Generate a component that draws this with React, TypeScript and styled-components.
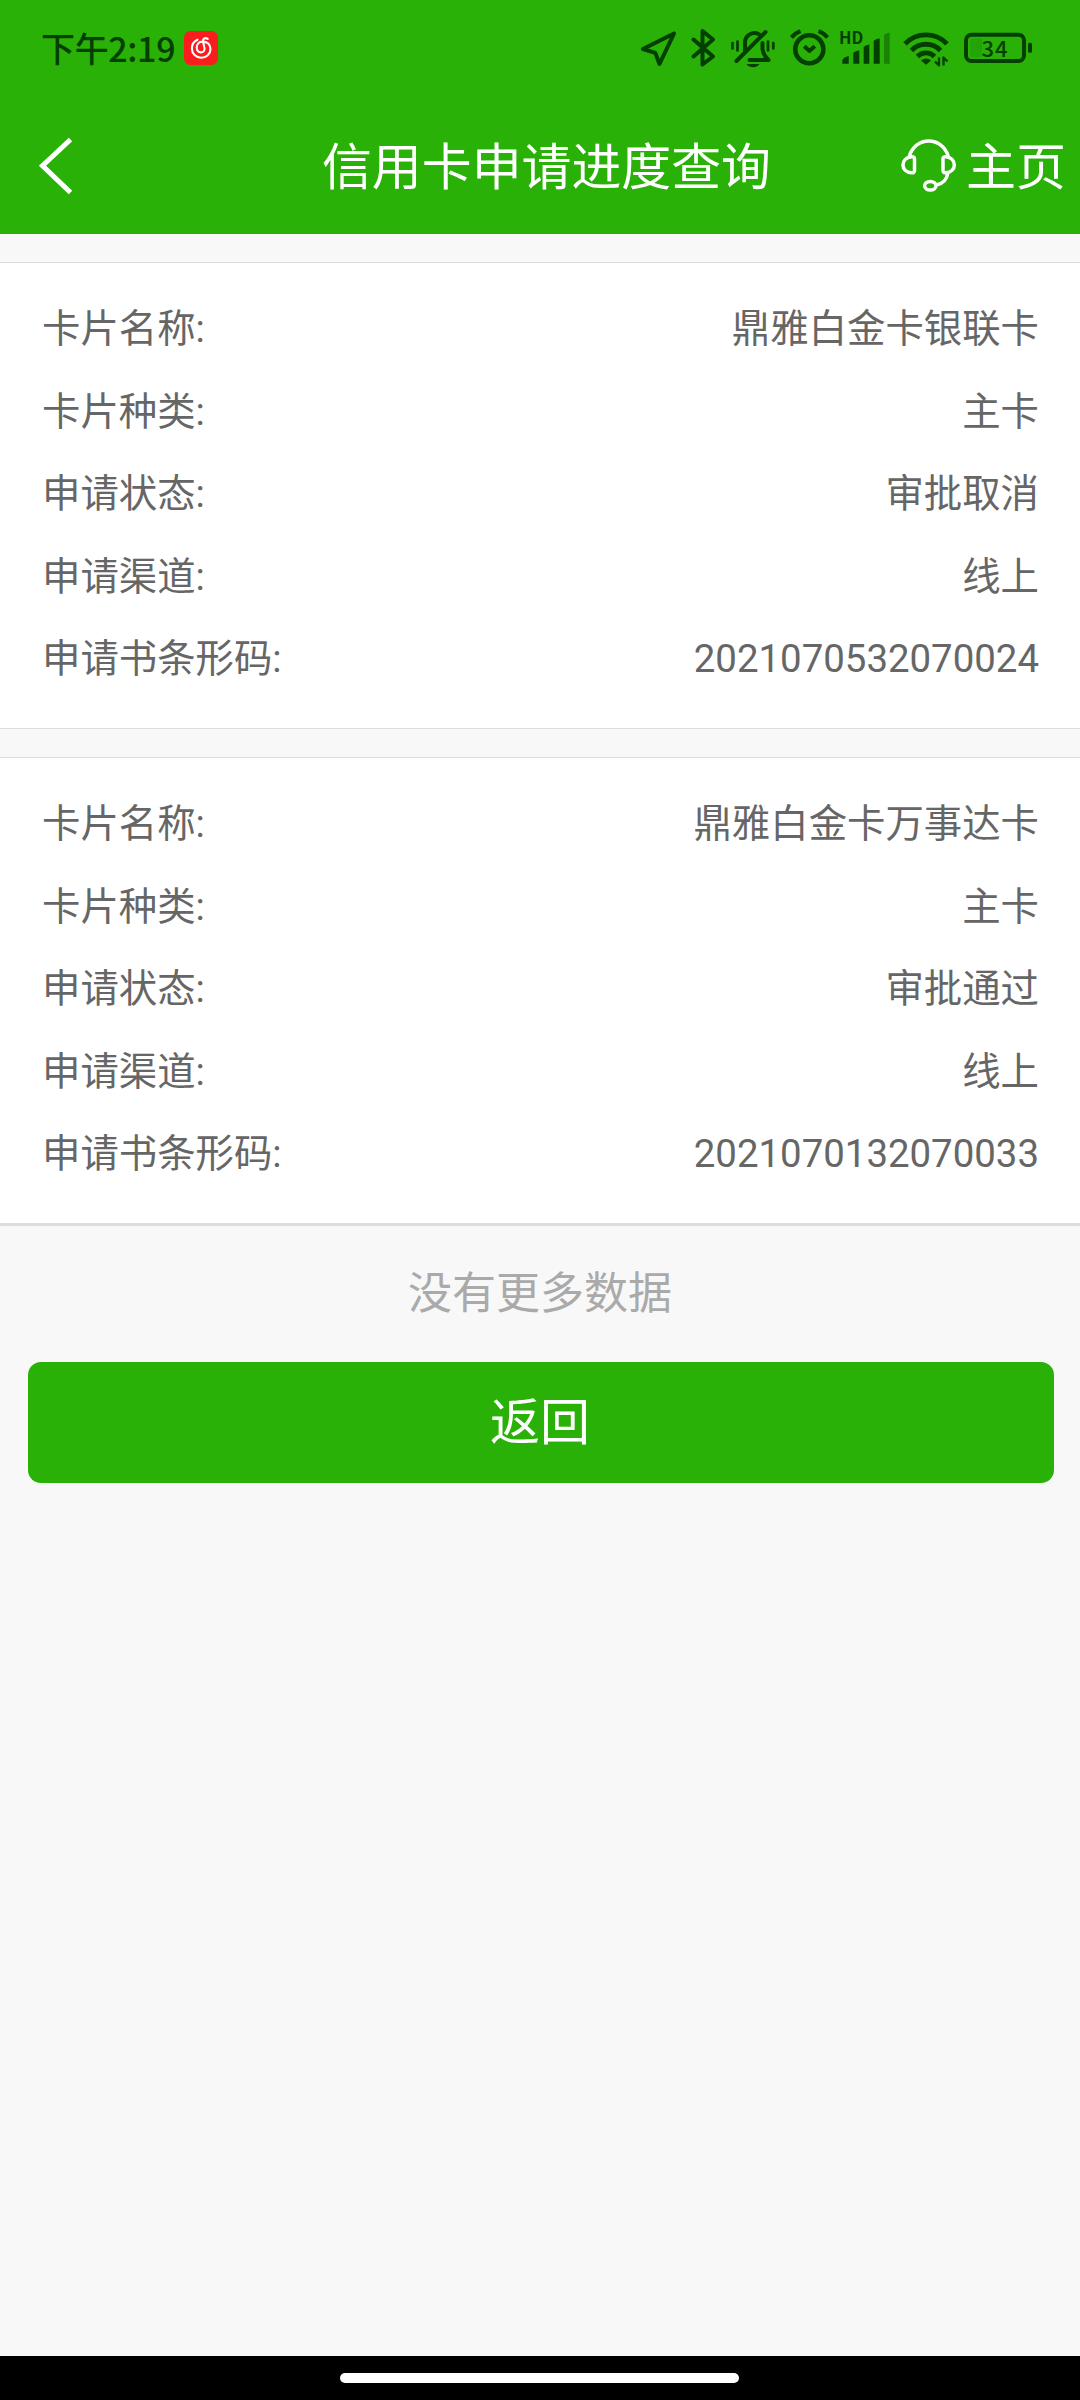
import React from "react";
import styled, { createGlobalStyle } from "styled-components";

const green = "#29b107";
const ink = "#043f02";

const GlobalStyle = createGlobalStyle`
  * { box-sizing: border-box; }
  html, body { margin: 0; padding: 0; background: #f8f8f8; }
  body { font-family: Roboto, "Noto Sans CJK SC", sans-serif; }
  h1, p, dl, dt, dd { margin: 0; font-weight: 400; }
`;

const Screen = styled.div`
  width: 1080px;
  height: 2400px;
  display: flex;
  flex-direction: column;
  background: #f8f8f8;
  overflow: hidden;
`;

const StatusBar = styled.div`
  height: 96px;
  flex: none;
  padding: 0 45px 0 41px;
  display: flex;
  align-items: center;
  justify-content: space-between;
  background: ${green};
`;

const StatusGroup = styled.div<{ $gap: number }>`
  display: flex;
  align-items: center;
  gap: ${(p) => p.$gap}px;
`;

const Clock = styled.span`
  font: 500 34px/44px "Noto Sans CJK SC", sans-serif;
  letter-spacing: -0.35px;
  color: ${ink};
`;

const Glyph = styled.svg`
  display: block;
  flex: none;
  overflow: visible;
`;

const NavBar = styled.header`
  height: 138px;
  flex: none;
  display: grid;
  grid-template-columns: 200px 1fr 200px;
  align-items: center;
  background: ${green};
  color: #fff;
`;

const BackButton = styled.button`
  width: 110px;
  height: 138px;
  padding: 2px 0 0 36px;
  border: 0;
  background: none;
  display: flex;
  align-items: center;
`;

const Title = styled.h1`
  padding: 5px 0 0 13px;
  text-align: center;
  font-size: 49.9px;
  line-height: 60px;
  white-space: nowrap;
`;

const HomeLink = styled.a`
  display: flex;
  align-items: center;
  justify-content: flex-end;
  gap: 8px;
  padding-right: 14px;
  color: #fff;
`;

const HomeLabel = styled.span`
  padding-top: 5px;
  font-size: 50px;
  line-height: 60px;
  white-space: nowrap;
`;

const Results = styled.main`
  flex: 1;
  display: flex;
  flex-direction: column;
  padding-top: 28px;
`;

const Card = styled.dl<{ $last?: boolean }>`
  height: ${(p) => (p.$last ? 469 : 467)}px;
  margin-bottom: ${(p) => (p.$last ? 0 : 28)}px;
  padding: 25px 41px 0 42px;
  border-top: 1px solid #dddddd;
  border-bottom: ${(p) => (p.$last ? "3px" : "1px")} solid #dddddd;
  background: #fff;
`;

const Row = styled.div`
  height: 82.5px;
  display: flex;
  align-items: center;
  justify-content: space-between;
  font-size: 38.4px;
  line-height: 56px;
  color: #666;
`;

const EmptyNote = styled.p`
  margin-top: 36px;
  height: 64px;
  text-align: center;
  font-size: 44px;
  line-height: 64px;
  color: #aaa;
`;

const ReturnButton = styled.button`
  height: 121px;
  margin: 36px 26px 0 28px;
  padding: 0 2px 0 0;
  border: 0;
  border-radius: 13px;
  background: ${green};
  color: #fff;
  font: 400 50px/60px Roboto, "Noto Sans CJK SC", sans-serif;
`;

const GestureBar = styled.footer`
  height: 44px;
  flex: none;
  display: flex;
  justify-content: center;
  padding: 17px 1px 0 0;
  background: #000;
`;

const GestureHandle = styled.div`
  width: 399px;
  height: 10px;
  border-radius: 5px;
  background: #fff;
`;

function StatusGlyph({ x, w, children }: { x: number; w: number; children: React.ReactNode }) {
  return (
    <Glyph
      width={w}
      height={44}
      viewBox={`${x} 26 ${w} 44`}
      fill="none"
      stroke={ink}
      strokeWidth={4}
      strokeLinejoin="round"
      strokeLinecap="round"
    >
      {children}
    </Glyph>
  );
}

function MusicBadge() {
  return (
    <Glyph width={34} height={34} viewBox="184 31 34 34" fill="none" stroke="#fff" strokeWidth={2.1} strokeLinecap="round">
      <rect x="184" y="31" width="34" height="34" rx="6.5" fill="#f91d1d" stroke="none" />
      <path d="M197.500 39.700c-3.600 1.600-5.600 4.900-5.600 8.700 0 5.300 4.200 9.400 9.300 9.400s9.300-3.800 9.300-8.900c0-4.500-3.500-7.300-7.800-7.300-4 0-6 3-6 6 0 2.800 1.700 4.800 4.200 4.800s4-2 3.600-4.300l-1.500-6.600c-.5-2.900 2.400-4.300 4.700-2.700" />
    </Glyph>
  );
}

function StatusIcons() {
  return (
    <StatusGroup $gap={8}>
      <StatusGlyph x={640} w={40}>
        <path d="M643 49 674 33.500 659.500 64 655.300 52.800Z" />
      </StatusGlyph>
      <StatusGlyph x={688} w={32}>
        <path d="M693.500 39.500 713 56.500 702.500 64.500V31L713 39.500 693.500 56.500" />
      </StatusGlyph>
      <StatusGlyph x={728} w={52}>
        <path d="M745 52V42.500a9.500 9.500 0 0 1 14-8.300M762.500 43v6q.5 5.500 6 11H749.500M736.500 61 765.500 32" />
        <path d="M746.500 64h13q-2.500 3.300-6.500 3.300T746.500 64Z" fill={ink} stroke="none" />
        <path d="M732.500 43v5.500M737.500 41.500v9M768 41.500v9M773.300 43v5.500" strokeWidth={2.700} />
      </StatusGlyph>
      <StatusGlyph x={788} w={43}>
        <circle cx="809.300" cy="49.300" r="14" strokeWidth={4.600} />
        <path d="M791.500 37.500q3.500-4.500 9-6.300M818.500 31.200q5.500 1.800 9 6.300M804.300 46.200l5 4.700 5.500-4.700" strokeLinecap="butt" />
      </StatusGlyph>
      <StatusGlyph x={839} w={54}>
        <g fill={ink} stroke="none">
          <text x="839" y="43.800" fontSize="16.500" fontWeight="700" fontFamily="'Noto Sans CJK SC', sans-serif">HD</text>
          <path d="M842.300 63.700v-3.500q1.500-3.200 6.400-4.200v7.700ZM853.300 63.700V53q1.500-2 6-2.500v13.200ZM863.700 63.700V47q1.500-2 5.600-2.500v19.200ZM873.700 63.700V41q1.500-2 6-2.500v25.200Z" />
          <path d="M884 63.700V35q1.500-2 5.700-2.300v31Z" opacity=".4" />
        </g>
      </StatusGlyph>
      <StatusGlyph x={901} w={52}>
        <path d="M905 43.800a29 29 0 0 1 42 0M911.500 50.500a20 20 0 0 1 29 0M917.500 56.500a12 12 0 0 1 17 0" strokeWidth={4.800} strokeLinecap="butt" />
        <path d="M921 60.500q5-4 10 0l-5 4.300Z" fill={ink} stroke="none" />
        <path d="M939 57.500v8l-4-4M943.500 65.500v-8l4 4" strokeWidth={2.300} strokeLinecap="butt" />
      </StatusGlyph>
      <StatusGlyph x={961} w={74}>
        <rect x="970" y="38.500" width="12" height="18.500" rx="2" fill={ink} stroke="none" opacity=".12" />
        <rect x="966" y="34.700" width="58" height="26.300" rx="5.500" />
        <rect x="1028" y="42.700" width="4" height="10" rx="1.500" fill={ink} stroke="none" />
        <text x="981.500" y="56.700" fontSize="22" fontWeight="500" letterSpacing="1" fill={ink} stroke="none" fontFamily="'Noto Sans CJK SC', sans-serif">34</text>
      </StatusGlyph>
    </StatusGroup>
  );
}

function BackIcon() {
  return (
    <Glyph width={40} height={60} viewBox="36 136 40 60" fill="none" stroke="#fff" strokeWidth={5} strokeLinecap="butt">
      <path d="M70.500 139.500 42.500 165.700 70.500 192.500" />
    </Glyph>
  );
}

function HeadsetIcon() {
  return (
    <Glyph width={58} height={56} viewBox="901 137 58 56" fill="none" stroke="#fff" strokeWidth={3.500} strokeLinecap="round" strokeLinejoin="round">
      <path d="M910.500 155.500c3-9 10.500-14.500 19.200-14.500s16.300 5.500 19.300 14.500" />
      <path d="M915.500 159v11.500q0 2.500-3 2.300c-5.300-.4-8.500-3.600-8.500-7.900s3.200-7.700 8.500-8.200q3-.2 3 2.300ZM944 159v11.500q0 2.500 3 2.300c5-.4 8.300-3.600 8.300-7.900s-3.300-7.700-8.300-8.200q-3-.2-3 2.300Z" />
      <path d="M948.500 174c-.5 5-4.500 9.300-10.500 10.800" />
      <ellipse cx="931.300" cy="185.800" rx="5.700" ry="4.300" />
    </Glyph>
  );
}

type Application = { name: string; kind: string; status: string; channel: string; barcode: string };

const applications: Application[] = [
  { name: "鼎雅白金卡银联卡", kind: "主卡", status: "审批取消", channel: "线上", barcode: "2021070532070024" },
  { name: "鼎雅白金卡万事达卡", kind: "主卡", status: "审批通过", channel: "线上", barcode: "2021070132070033" },
];

const fields: [keyof Application, string][] = [
  ["name", "卡片名称:"],
  ["kind", "卡片种类:"],
  ["status", "申请状态:"],
  ["channel", "申请渠道:"],
  ["barcode", "申请书条形码:"],
];

export default function App() {
  return (
    <Screen lang="zh-CN">
      <GlobalStyle />
      <StatusBar>
        <StatusGroup $gap={9}>
          <Clock>下午2:19</Clock>
          <MusicBadge />
        </StatusGroup>
        <StatusIcons />
      </StatusBar>
      <NavBar>
        <BackButton aria-label="返回">
          <BackIcon />
        </BackButton>
        <Title>信用卡申请进度查询</Title>
        <HomeLink>
          <HeadsetIcon />
          <HomeLabel>主页</HomeLabel>
        </HomeLink>
      </NavBar>
      <Results>
        {applications.map((item, i) => (
          <Card key={item.barcode} $last={i === applications.length - 1}>
            {fields.map(([key, label]) => (
              <Row key={key}>
                <dt>{label}</dt>
                <dd>{item[key]}</dd>
              </Row>
            ))}
          </Card>
        ))}
        <EmptyNote>没有更多数据</EmptyNote>
        <ReturnButton>返回</ReturnButton>
      </Results>
      <GestureBar>
        <GestureHandle />
      </GestureBar>
    </Screen>
  );
}
